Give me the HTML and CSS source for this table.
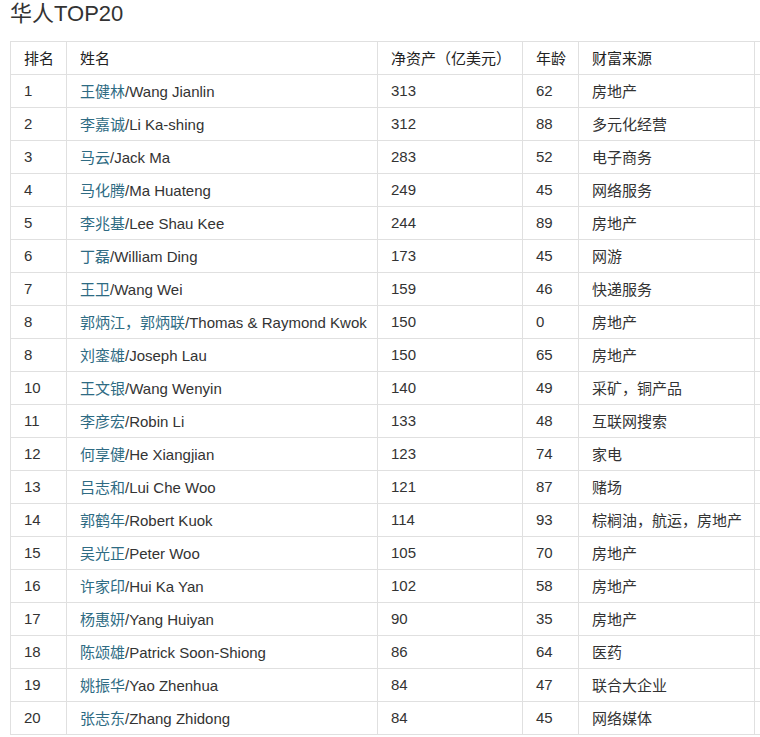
FILE: index.html
```html
<!DOCTYPE html>
<html lang="zh-CN">
<head>
<meta charset="utf-8">
<title>华人TOP20</title>
<link rel="stylesheet" href="styles.css">
</head>
<body>
<h1 class="title">华人TOP20</h1>
<table class="rank">
<colgroup>
<col class="c-rank"><col class="c-name"><col class="c-worth"><col class="c-age"><col class="c-src"><col class="c-extra">
</colgroup>
<thead>
<tr><th>排名</th><th>姓名</th><th>净资产（亿美元）</th><th>年龄</th><th>财富来源</th><th></th></tr>
</thead>
<tbody>
<tr><td>1</td><td><span class="cn">王健林</span>/Wang Jianlin</td><td>313</td><td>62</td><td>房地产</td><td></td></tr>
<tr><td>2</td><td><span class="cn">李嘉诚</span>/Li Ka-shing</td><td>312</td><td>88</td><td>多元化经营</td><td></td></tr>
<tr><td>3</td><td><span class="cn">马云</span>/Jack Ma</td><td>283</td><td>52</td><td>电子商务</td><td></td></tr>
<tr><td>4</td><td><span class="cn">马化腾</span>/Ma Huateng</td><td>249</td><td>45</td><td>网络服务</td><td></td></tr>
<tr><td>5</td><td><span class="cn">李兆基</span>/Lee Shau Kee</td><td>244</td><td>89</td><td>房地产</td><td></td></tr>
<tr><td>6</td><td><span class="cn">丁磊</span>/William Ding</td><td>173</td><td>45</td><td>网游</td><td></td></tr>
<tr><td>7</td><td><span class="cn">王卫</span>/Wang Wei</td><td>159</td><td>46</td><td>快递服务</td><td></td></tr>
<tr><td>8</td><td><span class="cn">郭炳江，郭炳联</span>/Thomas &amp; Raymond Kwok</td><td>150</td><td>0</td><td>房地产</td><td></td></tr>
<tr><td>8</td><td><span class="cn">刘銮雄</span>/Joseph Lau</td><td>150</td><td>65</td><td>房地产</td><td></td></tr>
<tr><td>10</td><td><span class="cn">王文银</span>/Wang Wenyin</td><td>140</td><td>49</td><td>采矿，铜产品</td><td></td></tr>
<tr><td>11</td><td><span class="cn">李彦宏</span>/Robin Li</td><td>133</td><td>48</td><td>互联网搜索</td><td></td></tr>
<tr><td>12</td><td><span class="cn">何享健</span>/He Xiangjian</td><td>123</td><td>74</td><td>家电</td><td></td></tr>
<tr><td>13</td><td><span class="cn">吕志和</span>/Lui Che Woo</td><td>121</td><td>87</td><td>赌场</td><td></td></tr>
<tr><td>14</td><td><span class="cn">郭鹤年</span>/Robert Kuok</td><td>114</td><td>93</td><td>棕榈油，航运，房地产</td><td></td></tr>
<tr><td>15</td><td><span class="cn">吴光正</span>/Peter Woo</td><td>105</td><td>70</td><td>房地产</td><td></td></tr>
<tr><td>16</td><td><span class="cn">许家印</span>/Hui Ka Yan</td><td>102</td><td>58</td><td>房地产</td><td></td></tr>
<tr><td>17</td><td><span class="cn">杨惠妍</span>/Yang Huiyan</td><td>90</td><td>35</td><td>房地产</td><td></td></tr>
<tr><td>18</td><td><span class="cn">陈颂雄</span>/Patrick Soon-Shiong</td><td>86</td><td>64</td><td>医药</td><td></td></tr>
<tr><td>19</td><td><span class="cn">姚振华</span>/Yao Zhenhua</td><td>84</td><td>47</td><td>联合大企业</td><td></td></tr>
<tr><td>20</td><td><span class="cn">张志东</span>/Zhang Zhidong</td><td>84</td><td>45</td><td>网络媒体</td><td></td></tr>
</tbody>
</table>
</body>
</html>
```
FILE: styles.css
```css
html {
  overflow: hidden;
  background: #fff;
}
body {
  margin: 0;
  color: #333;
  font-family: "Liberation Sans", Arial, "Noto Sans CJK SC", sans-serif;
  font-size: 15px;
}
.title {
  margin: 0 0 11px;
  padding: 0 10px;
  height: 30px;
  line-height: 28px;
  font-size: 22px;
  font-weight: normal;
  color: #333;
}
.rank {
  margin-left: 10px;
  border-collapse: collapse;
  table-layout: fixed;
  width: 750px;
}
.c-rank { width: 56px; }
.c-name { width: 311px; }
.c-worth { width: 145px; }
.c-age { width: 56px; }
.c-src { width: 176px; }
.c-extra { width: 6px; }
.rank th,
.rank td {
  border: 1px solid #e0e0e0;
  height: 30px;
  padding: 0 0 2px 13px;
  text-align: left;
  vertical-align: middle;
  font-weight: normal;
  white-space: nowrap;
  overflow: hidden;
}
.rank th:last-child,
.rank td:last-child {
  padding: 0;
  border-right: 0;
}
.rank th {
  color: #222;
}
.cn {
  color: #2e6b83;
}
```
